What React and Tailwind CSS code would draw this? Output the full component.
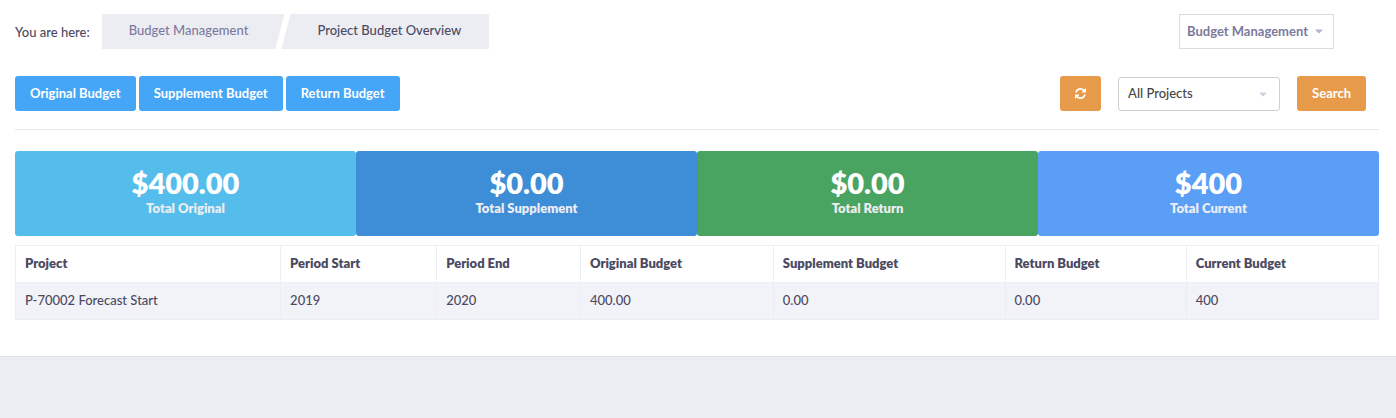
import React, { useState } from 'react';
import { FaCaretDown } from "react-icons/fa";

const actions = ["Original Budget", "Supplement Budget", "Return Budget"];

const totals = [
    { label: "Total Original", value: "$400.00", color: "bg-[#54bdeb]" },
    { label: "Total Supplement", value: "$0.00", color: "bg-[#3d8ed6]" },
    { label: "Total Return", value: "$0.00", color: "bg-[#4aa461]" },
    { label: "Total Current", value: "$400", color: "bg-[#5a9ff5]" },
];

const columns = [
    { name: "Project", width: "w-[19.45%]" },
    { name: "Period Start", width: "w-[11.45%]" },
    { name: "Period End", width: "w-[10.55%]" },
    { name: "Original Budget", width: "w-[14.15%]" },
    { name: "Supplement Budget", width: "w-[17%]" },
    { name: "Return Budget", width: "w-[13.3%]" },
    { name: "Current Budget", width: "w-[14.1%]" },
];

const rows = [
    ["P-70002 Forecast Start", "2019", "2020", "400.00", "0.00", "0.00", "400"],
];

const RefreshIcon = () => (
    <svg viewBox="0 0 1536 1792" width="11" height="13" fill="currentColor" aria-hidden="true">
        <path d="M1511 1056q0 5-1 7-64 268-268 434.5T764 1664q-146 0-282.5-55T238 1452l-129 129q-19 19-45 19t-45-19-19-45v-448q0-26 19-45t45-19h448q26 0 45 19t19 45-19 45l-137 137q71 66 161 102t187 36q134 0 250-65t186-179q11-17 53-117 8-23 30-23h192q13 0 22.5 9.5t9.5 22.5zm25-800v448q0 26-19 45t-45 19h-448q-26 0-45-19t-19-45 19-45l138-138Q969 384 768 384q-134 0-250 65T332 628q-11 17-53 117-8 23-30 23H50q-13 0-22.5-9.5T18 736v-7q65-268 270-434.5T768 128q146 0 284 55.5T1297 340l130-129q19-19 45-19t45 19 19 45z" />
    </svg>
);

const App = () => {
    const [project, setProject] = useState("all");

    return (
        <div className="min-h-screen bg-[#ecedf3] font-['Lato',sans-serif] text-[13px] leading-[18px] font-medium text-[#4b4a62]">
            <main className="bg-white border-b border-[#dfe3ea] pl-[15px] pr-[17px] pt-[14px] pb-9">
                {/* Breadcrumb */}
                <div className="flex justify-between items-center pr-[45px]">
                    <nav aria-label="Breadcrumb" className="flex items-center">
                        <span className="mr-3">You are here:</span>
                        <a
                            href="#budget"
                            className="flex items-center h-[35px] pl-[27px] pr-9 pb-[3px] bg-[#ecedf3] text-[#7c7a9c] [clip-path:polygon(0_0,100%_0,calc(100%-9px)_100%,0_100%)]"
                        >
                            Budget Management
                        </a>
                        <a
                            href="#overview"
                            aria-current="page"
                            className="flex items-center h-[35px] -ml-[3px] pl-9 pr-7 pb-[3px] bg-[#ecedf3] [clip-path:polygon(9px_0,100%_0,100%_100%,0_100%)]"
                        >
                            Project Budget Overview
                        </a>
                    </nav>
                    <button className="flex items-center gap-[5px] h-[35px] pl-[7px] pr-2 pb-[2px] border border-[#dcdcdf] font-bold text-[#7c7a9c]">
                        Budget Management
                        <FaCaretDown size={12} color="#b5b4c8" />
                    </button>
                </div>

                {/* Actions and filter */}
                <div className="flex justify-between items-center mt-[27px] pr-[13px]">
                    <div className="flex gap-[3px]">
                        {actions.map((action) => (
                            <button
                                key={action}
                                className="h-[35px] px-[15px] pb-[2px] rounded-[3px] bg-[#45a6f7] font-bold text-white"
                            >
                                {action}
                            </button>
                        ))}
                    </div>
                    <div className="flex items-center gap-[17px]">
                        <button
                            aria-label="Refresh"
                            className="flex items-center justify-center w-[41px] h-[35px] rounded-[3px] bg-[#e79a4a] text-white"
                        >
                            <RefreshIcon />
                        </button>
                        <div className="relative">
                            <select
                                aria-label="Project"
                                value={project}
                                onChange={(e) => setProject(e.target.value)}
                                className="appearance-none w-[162px] h-[34px] pl-[9px] pb-[2px] border border-[#cfcfd2] rounded-[3px] bg-white text-[#444]"
                            >
                                <option value="all">All Projects</option>
                                <option value="P-70002">P-70002 Forecast Start</option>
                            </select>
                            <FaCaretDown
                                size={12}
                                color="#cdd2e0"
                                className="absolute right-[11px] top-[11px] pointer-events-none"
                            />
                        </div>
                        <button className="h-[35px] px-[15px] pb-[2px] rounded-[3px] bg-[#e79a4a] font-bold text-white">
                            Search
                        </button>
                    </div>
                </div>

                <hr className="mt-[18px] border-[#e7e7ea]" />

                {/* Totals */}
                <div className="grid grid-cols-4 mt-[21px] text-center">
                    {totals.map((total) => (
                        <div key={total.label} className={`${total.color} rounded-[3px] pt-[15px] pb-[19px]`}>
                            <div className="text-[29px] leading-[33px] font-extrabold text-white">{total.value}</div>
                            <div className="font-extrabold text-[#ecedf3]">{total.label}</div>
                        </div>
                    ))}
                </div>

                <table className="w-full mt-[9px] border-collapse text-left">
                    <thead>
                        <tr>
                            {columns.map((column) => (
                                <th
                                    key={column.name}
                                    className={`${column.width} px-[9px] pt-2 pb-[10px] border border-[#ecedf5] font-extrabold`}
                                >
                                    {column.name}
                                </th>
                            ))}
                        </tr>
                    </thead>
                    <tbody>
                        {rows.map((row) => (
                            <tr key={row[0]} className="bg-[#f2f3f8]">
                                {row.map((cell, index) => (
                                    <td key={index} className="px-[9px] pt-2 pb-[10px] border border-[#ecedf5]">
                                        {cell}
                                    </td>
                                ))}
                            </tr>
                        ))}
                    </tbody>
                </table>
            </main>
        </div>
    );
};

export default App;
